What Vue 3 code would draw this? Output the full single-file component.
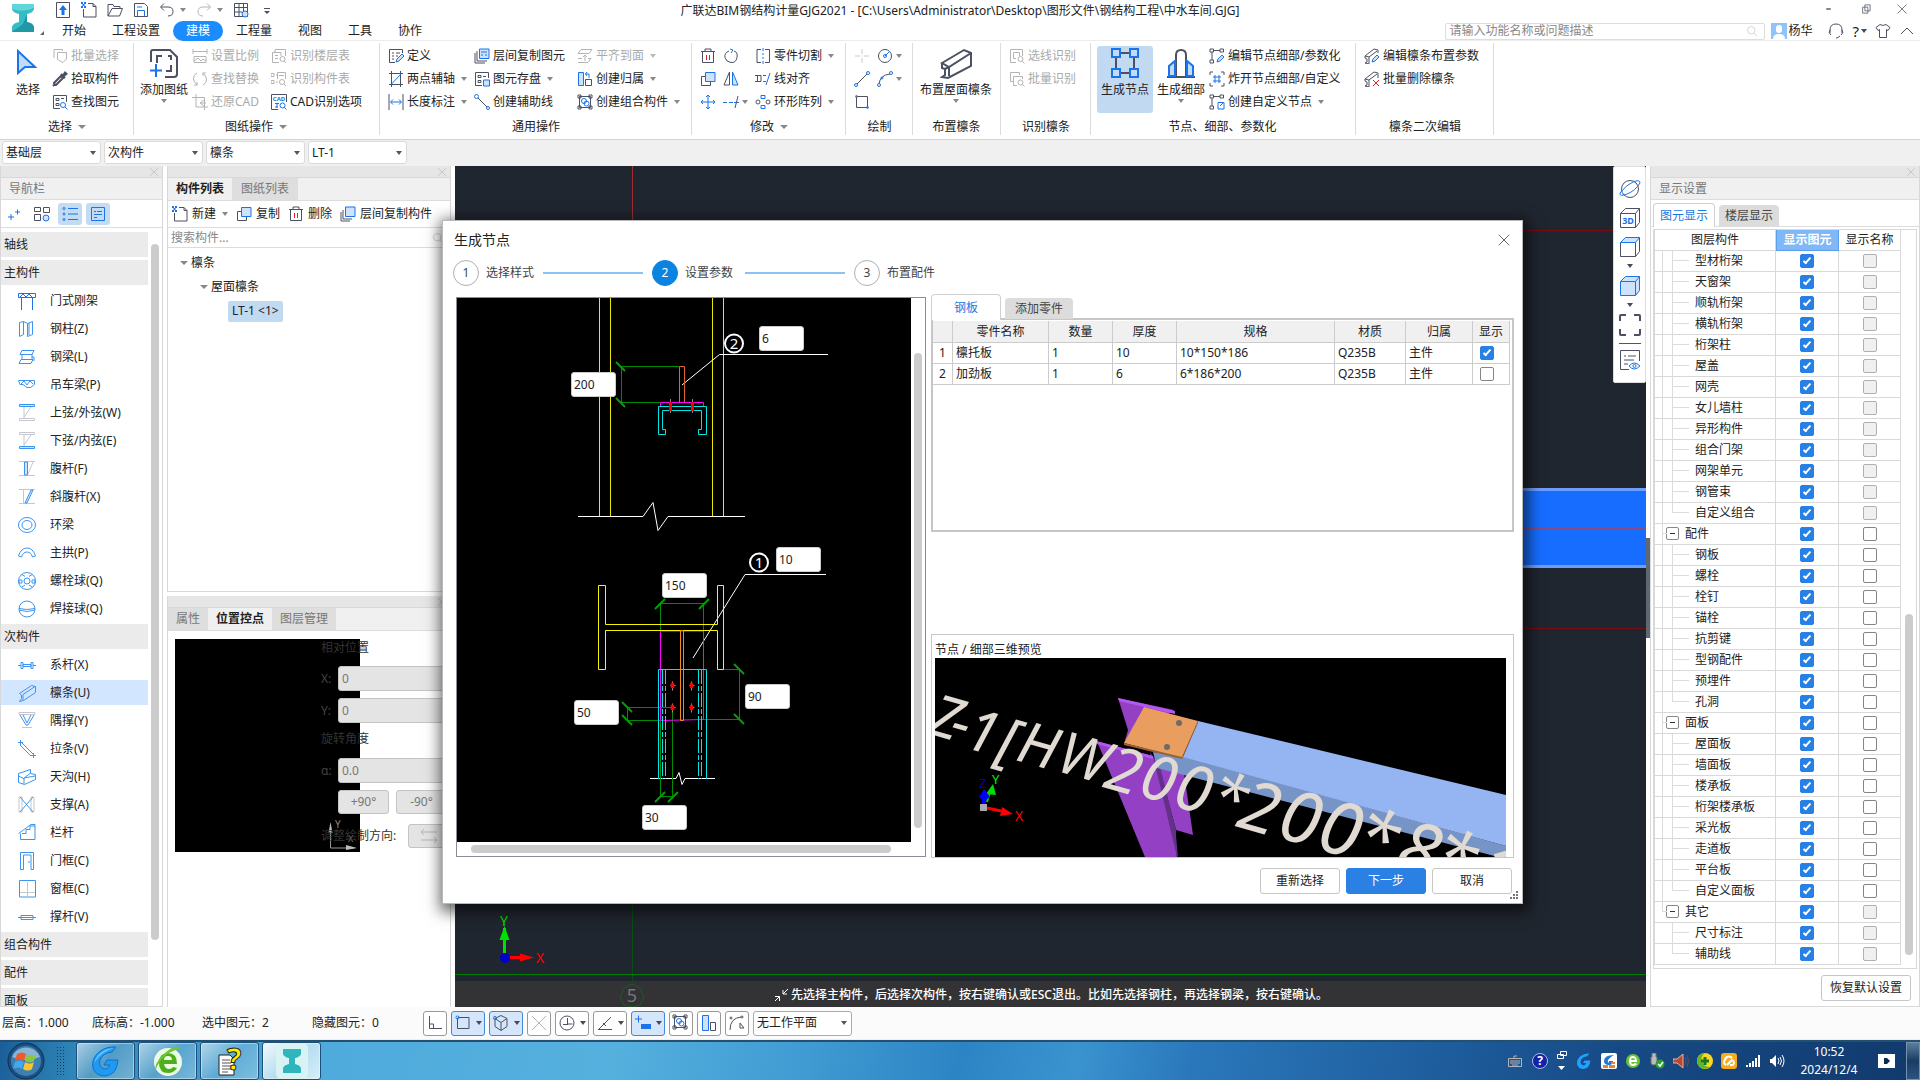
<template>
  <div class="app">
    <!-- 标题栏 -->
    <header class="header">
      <div class="logo">
        <svg width="24" height="30" viewBox="0 0 24 30">
          <path d="M1 1h22v5q-1 4-7 5v8q6 1 7 5v5h-22v-5q1-4 7-5v-8q-6-1-7-5z" fill="#35bcc4" />
          <path d="M1 1h22v4q-11 5-22 1z" fill="#5fd6d8" />
          <path d="M23 29v-5q-1-4-7-5v-8l-4 10-11 8z" fill="#2098a6" />
        </svg>
        <i class="corner"></i>
      </div>
      <div class="quick">
        <button v-for="q in quickTools" :key="q.icon" type="button" class="plain" :aria-label="q.label">
          <Ico :name="q.icon" :muted="q.muted" /><i v-if="q.arrow" class="arrow"></i>
        </button>
      </div>
      <h1 class="title">广联达BIM钢结构计量GJG2021 - [C:\Users\Administrator\Desktop\图形文件\钢结构工程\中水车间.GJG]</h1>
      <div class="win-btns">
        <button v-for="w in ['min', 'restore', 'close']" :key="w" type="button" class="plain" :aria-label="w"><Ico :name="w" :size="12" /></button>
      </div>
      <nav class="tabs">
        <a v-for="t in menuTabs" :key="t" href="#" :class="{ active: t === activeTab }" @click.prevent="activeTab = t">{{ t }}</a>
      </nav>
      <div class="user-area">
        <label class="search-box">
          <input type="text" placeholder="请输入功能名称或问题描述" aria-label="搜索功能">
          <Ico name="search" :size="12" />
        </label>
        <svg class="avatar" width="16" height="16" viewBox="0 0 16 16">
          <path d="M0 0h16v16H0z" fill="#8fc4fb" />
          <path d="M5 5a3 3 0 0 1 6 0v2a3 3 0 0 1-6 0zM2 16q0-5 6-5t6 5z" fill="#fff" />
        </svg>
        <span class="user-name">杨华</span>
        <button type="button" class="plain" aria-label="客服"><Ico name="headset" /></button>
        <button type="button" class="plain help" aria-label="帮助">?<i class="arrow dark"></i></button>
        <button type="button" class="plain" aria-label="皮肤"><Ico name="shirt" /></button>
        <button type="button" class="plain" aria-label="收起"><Ico name="up" /></button>
      </div>
    </header>

    <!-- 功能区 -->
    <section class="ribbon">
      <div v-for="g in ribbon" :key="g.label" class="group" :class="g.cls">
        <div class="group-body">
          <template v-for="(col, ci) in g.cols" :key="ci">
            <button v-if="col.big" type="button" class="big" :class="{ active: col.active }">
              <Ico :name="col.big" :size="32" :box="32" />
              <span>{{ col.text }}</span>
              <i v-if="col.arrow" class="arrow"></i>
            </button>
            <div v-else class="col" :class="{ wide: col.wide }">
              <button v-for="(b, bi) in col.items" :key="bi" type="button" class="small" :disabled="b.off" :aria-label="b.text || b.icon">
                <Ico :name="b.icon" :muted="b.off" />
                <span v-if="b.text">{{ b.text }}</span>
                <i v-if="b.arrow" class="arrow"></i>
              </button>
            </div>
          </template>
        </div>
        <div class="group-label">{{ g.label }}<i v-if="g.more" class="arrow large"></i></div>
      </div>
    </section>

    <div class="combos">
      <span v-for="c in combos" :key="c" class="select-wrap">
        <select :aria-label="c"><option>{{ c }}</option></select>
      </span>
    </div>

    <main class="main">
      <!-- 导航栏 -->
      <aside class="nav-panel">
        <div class="grip"><Ico name="close" :size="10" muted /></div>
        <div class="panel-title">导航栏</div>
        <div class="nav-tools">
          <button type="button" class="plain" aria-label="展开"><Ico name="plusplus" /></button>
          <button type="button" class="plain" aria-label="分类"><Ico name="blocks" /></button>
          <button type="button" class="plain on" aria-label="列表"><Ico name="list" /></button>
          <button type="button" class="plain on" aria-label="详情"><Ico name="detail" /></button>
        </div>
        <div class="nav-scroll">
          <div class="nav-list">
            <template v-for="sec in navSections" :key="sec.title">
              <div class="nav-head">{{ sec.title }}</div>
              <a v-for="item in sec.items" :key="item[1]" href="#" class="nav-item" :class="{ active: item[1] === activeNav }" @click.prevent="activeNav = item[1]">
                <Ico :name="item[0]" :size="18" :box="18" /><span>{{ item[1] }}</span>
              </a>
            </template>
          </div>
          <i class="thumb"></i>
        </div>
      </aside>

      <!-- 构件列表 / 位置控点 -->
      <div class="middle">
        <section class="list-panel">
          <div class="grip"><Ico name="close" :size="10" muted /></div>
          <div class="panel-tabs">
            <button type="button" class="active">构件列表</button>
            <button type="button">图纸列表</button>
          </div>
          <div class="list-tools">
            <button type="button" class="plain"><Ico name="newFile" />新建<i class="arrow"></i></button>
            <button type="button" class="plain"><Ico name="copy" />复制</button>
            <button type="button" class="plain"><Ico name="trash" />删除</button>
            <button type="button" class="plain"><Ico name="copyLayer" />层间复制构件</button>
          </div>
          <label class="list-search"><input type="text" placeholder="搜索构件..." aria-label="搜索构件"><Ico name="search" :size="12" /></label>
          <ul class="tree">
            <li><i class="arrow large"></i>檩条</li>
            <li class="lv2"><i class="arrow large"></i>屋面檩条</li>
            <li class="lv3"><span>LT-1 &lt;1&gt;</span></li>
          </ul>
        </section>
        <section class="prop-panel">
          <div class="grip"><Ico name="close" :size="10" muted /></div>
          <div class="panel-tabs second">
            <button type="button">属性</button>
            <button type="button" class="active">位置控点</button>
            <button type="button">图层管理</button>
          </div>
          <div class="prop-body">
            <svg class="point-view" width="185" height="213" viewBox="0 0 185 213">
              <path d="M0 0h185v213H0z" />
              <path d="M155.500 186v23h24" stroke="#999" fill="none" />
              <path d="M153.500 194l2-11 2 11zM171 206l11 3-11 2z" fill="#bbb" />
              <text x="160" y="189" fill="#888" font-size="10">Y</text>
              <text x="173" y="203" fill="#777" font-size="9">X</text>
            </svg>
            <form class="point-form" @submit.prevent>
              <p>相对位置</p>
              <div class="field"><label for="px">X:</label><input id="px" value="0" disabled></div>
              <div class="field"><label for="py">Y:</label><input id="py" value="0" disabled></div>
              <p class="rot">旋转角度</p>
              <div class="field"><label for="pa">α:</label><input id="pa" value="0.0" disabled></div>
              <div class="turns"><button type="button" disabled>+90°</button><button type="button" disabled>-90°</button></div>
              <div class="direction"><span>调整绘制方向:</span><button type="button" disabled aria-label="调整绘制方向"><Ico name="swap" :size="20" :box="20" muted /></button></div>
            </form>
          </div>
        </section>
      </div>

      <!-- 绘图区 -->
      <section class="canvas">
        <svg class="scene" viewBox="455 166 1191 841" preserveAspectRatio="xMinYMin slice">
          <path d="M455 166h1191v841H455z" fill="#20262f" />
          <path d="M632.500 166v60" stroke="#a02c34" />
          <path d="M455 230.500h1191M455 628.500h1191" stroke="#7a0c12" />
          <path d="M632.500 628v379" stroke="#0b4d14" />
          <path d="M455 974.500h1191" stroke="#008000" />
          <path d="M455 488h1191v80H455z" fill="#6e9dff" />
          <path d="M455 491h1191v74H455z" fill="#176dff" />
          <path d="M455 528.500h1191" stroke="#8a4a80" />
          <path d="M455 981h1191v26H455z" fill="#333335" />
          <path d="M632 984l8 4 4 9-4 8-8 2-8-2-4-8 4-9z" stroke="#1d5a22" fill="none" />
          <text x="632" y="1002" class="axis-no" text-anchor="middle">5</text>
          <path d="M504.500 956v-28" stroke="#00e000" stroke-width="3" />
          <path d="M504.500 926l-5 14h10z" fill="#00e000" />
          <path d="M506 957.500h18" stroke="#f00" stroke-width="3" />
          <path d="M534 957.500l-14-4v8z" fill="#f00" />
          <circle cx="505" cy="958" r="5" fill="#0000c8" />
          <text x="500" y="926" fill="#00e000" class="axis-text">Y</text>
          <text x="536" y="963" fill="#f00" class="axis-text">X</text>
        </svg>
        <div class="hint"><Ico name="collapse" :size="16" light /> 先选择主构件，后选择次构件，按右键确认或ESC退出。比如先选择钢柱，再选择钢梁，按右键确认。</div>
        <div class="view-tools">
          <button v-for="v in viewTools" :key="v.icon" type="button" class="plain" :class="{ ruled: v.ruled }" :aria-label="v.icon">
            <Ico :name="v.icon" :size="22" :box="22" /><i v-if="v.arrow" class="arrow dark"></i>
          </button>
        </div>
      </section>
      <div class="splitter"><i></i></div>

      <!-- 显示设置 -->
      <aside class="show-panel">
        <div class="grip"><Ico name="close" :size="10" muted /></div>
        <div class="panel-title">显示设置</div>
        <div class="card-tabs">
          <button type="button" class="active">图元显示</button>
          <button type="button">楼层显示</button>
        </div>
        <div class="show-box">
          <table class="show-table">
            <thead>
              <tr><th class="c-name">图层构件</th><th class="picked">显示图元</th><th>显示名称</th></tr>
            </thead>
            <tbody>
              <tr v-for="r in layerRows" :key="r.name">
                <td class="c-name">
                  <div class="leaf" :class="{ parent: r.parent, last: r.last, tail: r.tail, end: r.name === '其它' }">
                    <button v-if="r.parent" type="button" class="fold" aria-label="折叠"></button>{{ r.name }}
                  </div>
                </td>
                <td><input v-model="r.show" type="checkbox" :aria-label="r.name + '显示图元'"></td>
                <td><input v-model="r.label" type="checkbox" :disabled="r.off" :aria-label="r.name + '显示名称'"></td>
              </tr>
            </tbody>
          </table>
          <i class="thumb"></i>
        </div>
        <div class="show-foot"><button type="button" class="btn">恢复默认设置</button></div>
      </aside>
    </main>

    <footer class="status">
      <span class="st1">层高：1.000</span>
      <span class="st2">底标高：-1.000</span>
      <span class="st3">选中图元：2</span>
      <span class="st4">隐藏图元：0</span>
      <div class="snap">
        <button v-for="s in snapTools" :key="s.icon" type="button" :class="{ on: s.on }" :aria-label="s.icon">
          <Ico :name="s.icon" :size="18" :box="18" :muted="s.muted" /><i v-if="s.arrow" class="arrow dark"></i>
        </button>
        <span class="select-wrap plane"><select aria-label="工作平面"><option>无工作平面</option></select></span>
      </div>
    </footer>

    <!-- 系统任务栏 -->
    <div class="taskbar">
      <button type="button" class="orb" aria-label="开始菜单">
        <svg width="38" height="38" viewBox="0 0 38 38">
          <circle cx="19" cy="19" r="18" fill="#1b4f80" stroke="#0e2f52" />
          <circle cx="19" cy="19" r="15" fill="#3d7fb2" />
          <path d="M5 15a15 15 0 0 1 28 0q-14 6-28 0z" fill="#a9cbe2" opacity=".7" />
          <path d="M10 12q5-3 9 0l-2 7q-4-3-9 0z" fill="#f0592a" />
          <path d="M20 12q5 3 9 0l-2 7q-4 3-9 0z" fill="#8cc63f" />
          <path d="M8 20q5-3 9 0l-2 7q-4-3-9 0z" fill="#3fa9f5" />
          <path d="M18 20q5 3 9 0l-2 7q-4 3-9 0z" fill="#fdc52c" />
        </svg>
      </button>
      <i class="dots"></i>
      <button type="button" class="task" aria-label="广联达">
        <svg width="32" height="34" viewBox="0 0 32 34"><path d="M26 3q-9-1-17 5-8 7-6 16 3 8 12 8 12-1 13-16H17l-3 5h6q-2 5-6 4-6-2-4-9 3-7 12-8z" fill="#1f9af0" stroke="#0c70d0" /><path d="M24 4q-9 0-15 6-4 4-5 9 7-11 20-15z" fill="#5fc3ff" /></svg>
      </button>
      <button type="button" class="task" aria-label="浏览器">
        <svg width="32" height="34" viewBox="0 0 32 34"><circle cx="16" cy="18" r="14" fill="#eefbe4" /><path d="M25 24q-3 5-9 5-9 0-9-10t9-10q9 0 9 11H12q1 5 5 5 3 0 4-2zM12 16h8q0-4-4-4t-4 4z" fill="#4fae1e" /><path d="M4 28Q1 20 12 10T29 4q-14 4-20 12T4 28z" fill="#6cc533" /></svg>
      </button>
      <button type="button" class="task" aria-label="帮助文档">
        <svg width="32" height="34" viewBox="0 0 32 34"><path d="M5 11h11l4 4v16H5z" fill="#fff" stroke="#222" /><path d="M8 16h8M8 19h9M8 22h9M8 25h9M8 28h6" stroke="#555" /><text x="13" y="26" class="doc-mark">?</text></svg>
      </button>
      <button type="button" class="task current" aria-label="钢结构计量">
        <svg width="32" height="36" viewBox="0 0 32 36"><rect width="32" height="36" rx="5" fill="#d9f3f5" /><path d="M7 6h18v5q-1 3-6 4v6q5 1 6 4v5H7v-5q1-3 6-4v-6q-5-1-6-4z" fill="#2fb5bc" /></svg>
      </button>
      <div class="tray">
        <Ico name="keyboard" :size="16" muted />
        <svg width="18" height="18" viewBox="0 0 18 18"><circle cx="9" cy="9" r="7.500" fill="#1522a8" stroke="#a9b8e8" /><text x="9" y="13" fill="#fff" font-size="12" font-weight="700" text-anchor="middle">?</text></svg>
        <svg width="10" height="22" viewBox="0 0 10 22"><path d="M3.500 1.500h6v4h-6zM.5 4.500h6v4h-6z" fill="#1c4d85" stroke="#fff" /><path d="M1 16h7l-3.500 4z" fill="#fff" /></svg>
        <svg width="18" height="18" viewBox="0 0 32 34"><path d="M26 3q-9-1-17 5-8 7-6 16 3 8 12 8 12-1 13-16H17l-3 5h6q-2 5-6 4-6-2-4-9 3-7 12-8z" fill="#1fa2ff" /></svg>
        <svg width="16" height="16" viewBox="0 0 16 16"><rect width="16" height="16" rx="2" fill="#fff" /><path d="M13 2Q3 2 3 8q0 4 5 4 4 0 4-4H8v2q-2-1-1-3 2-3 6-5z" fill="#1f78d8" /><path d="M2 12h5v3H2zM8 12h6v3H8zM10 9h4v2h-4z" fill="#f08030" /></svg>
        <svg width="16" height="16" viewBox="0 0 16 16"><circle cx="8" cy="8" r="7" fill="#6cc23a" /><path d="M12 11q-1 2-4 2-4 0-4-5t4-5q4 0 4 6H6q0 2 2 2 1 0 2-1zM6 7h4q0-2-2-2T6 7z" fill="#fff" /></svg>
        <svg width="16" height="16" viewBox="0 0 16 16"><path d="M3 0h4v4h1v6q0 2-3 2t-3-2V4h1z" fill="#b9bcc0" stroke="#6a6f76" /><circle cx="11" cy="11" r="4.500" fill="#28a428" /><path d="M9 11l2 2 3-4" stroke="#fff" stroke-width="1.500" fill="none" /></svg>
        <svg width="16" height="16" viewBox="0 0 16 16"><path d="M0 6h4l6-5v14l-6-5H0z" fill="#b84a30" stroke="#f0b0a0" /><path d="M12 4q2 4 0 8M14 2q3 6 0 12" stroke="#8a4030" fill="none" /></svg>
        <svg width="16" height="16" viewBox="0 0 16 16"><circle cx="8" cy="8" r="8" fill="#ffd61f" /><path d="M0 8a8 8 0 0 1 8-8q-5 4-3 9t8 5A8 8 0 0 1 0 8z" fill="#5fb82b" /><path d="M8 4v8M4 8h8" stroke="#147a28" stroke-width="3" /></svg>
        <svg width="16" height="16" viewBox="0 0 16 16"><rect width="16" height="16" rx="3" fill="#f7ab1e" /><path d="M5 12a3 3 0 0 1-1-5 4 4 0 0 1 7-2M6 12l5-5a3 3 0 0 1 1 5H9" stroke="#fff" stroke-width="2" fill="none" /></svg>
        <svg width="16" height="14" viewBox="0 0 16 14"><path d="M1 11h2v2H1zM4 9h2v4H4zM7 7h2v6H7zM10 4h2v9h-2zM13 1h2v12h-2z" fill="#fff" /></svg>
        <svg width="16" height="16" viewBox="0 0 16 16"><path d="M1 6h2l4-4v12l-4-4H1z" fill="#fff" /><path d="M9 5q2 3 0 6M11 4q3 4 0 8M13 2q4 6 0 12" stroke="#fff" fill="none" /></svg>
      </div>
      <div class="clock"><span>10:52</span><span>2024/12/4</span></div>
      <svg class="note" width="17" height="14" viewBox="0 0 17 14"><path d="M0 0h17v14H0z" fill="#fff" /><path d="M6 4h3l3 3-3 3H6z" fill="#0c2b4e" /></svg>
      <i class="desktop"></i>
    </div>

    <!-- 生成节点 -->
    <div class="overlay">
      <section class="dialog" role="dialog" aria-label="生成节点">
        <div class="dlg-title"><h2>生成节点</h2><button type="button" class="plain" aria-label="关闭"><Ico name="close" :size="14" /></button></div>
        <ol class="steps">
          <li><b>1</b>选择样式</li>
          <li class="bar"></li>
          <li class="on"><b>2</b>设置参数</li>
          <li class="bar"></li>
          <li><b>3</b>布置配件</li>
        </ol>
        <div class="dlg-body">
          <div class="drawing">
            <div class="sheet">
              <svg viewBox="457 298 454 544" width="454" height="544" fill="none">
                <path d="M457 298h454v544H457z" fill="#000" />
                <path d="M599.500 298v219M610.500 298v219M712.500 298v219M723.500 298v219" stroke="#e8e800" />
                <path d="M578 516.500h65l10-14 5 28 10-14h77M682 385l37.500-30.500H828M650 778.500h26l3-6 3 12 3-6h30M693 658l52-83.500h81" stroke="#fff" />
                <path d="M621.500 366v37M621 366.500h58M621 402.500h40M660 603.500h43M660.500 603v194M703.500 603v28M723 669.500h16M703 719.500h36M739.500 669v50M627 707.500h45M627 720.500h33M627.500 707v13M672.500 707v90M660 796.500h12" stroke="#008c00" />
                <path d="M616 362l9 9M616 398l9 9M655 609l10-10M699 609l10-10M622 702l10 10M622 715l10 10M734 664l10 10M734 714l10 10M655 802l10-10M668 802l10-10" stroke="#00a000" stroke-width="2" />
                <path d="M679.500 366.500h5v36h-5z" stroke="#e8622a" />
                <path d="M660.500 406v-3.500h43v3.500M660.500 631v89.500l43-1V631z" stroke="#f0f" />
                <path d="M658.500 406.500h48v28h-8v-5h3v-19h-39v19h3v5h-7zM658.500 779v-109.500h48V779" stroke="#00e5e5" />
                <path d="M662.500 670v109M665.500 670v109M698.500 670v109M701.500 670v109" stroke="#00e5e5" stroke-dasharray="14 2 5 2" />
                <path d="M598.500 585.500h7v39h112v-39h6v84h-6v-39h-112v39h-7z" stroke="#f5f500" />
                <path d="M680.500 630.500h3v90h-3z" stroke="#f08c1e" />
                <path d="M670.500 399v14M692.500 399v14" stroke="#888" />
                <path d="M670.500 402v9M692.500 402v9" stroke="#f00" stroke-width="3" />
                <g v-for="p in boltPoints" :key="p.join()">
                  <path :d="`M${p[0]} ${p[1] - 4}v9M${p[0] - 2} ${p[1]}h5`" stroke="#999" />
                  <ellipse :cx="p[0]" :cy="p[1]" rx="2" ry="3" fill="#f00" />
                </g>
                <circle cx="734" cy="343.500" r="9" stroke="#fff" stroke-width="2" />
                <circle cx="759" cy="562.500" r="9" stroke="#fff" stroke-width="2" />
                <text x="734" y="349" fill="#fff" font-size="15" text-anchor="middle">2</text>
                <text x="759" y="568" fill="#fff" font-size="15" text-anchor="middle">1</text>
              </svg>
              <input v-for="d in dims" :key="d.id" v-model="d.value" class="dim" :class="d.id" :aria-label="'尺寸 ' + d.value">
            </div>
            <i class="v-thumb"></i>
            <i class="h-thumb"></i>
          </div>

          <div class="dlg-right">
            <div class="card-tabs parts-tabs">
              <button type="button" class="active">钢板</button>
              <button type="button">添加零件</button>
            </div>
            <div class="parts-box">
              <table class="parts">
                <colgroup><col v-for="n in 8" :key="n" :class="'p' + n"></colgroup>
                <thead>
                  <tr><th></th><th v-for="h in partHeads" :key="h">{{ h }}</th></tr>
                </thead>
                <tbody>
                  <tr v-for="(p, i) in parts" :key="p.name">
                    <td class="no">{{ i + 1 }}</td>
                    <td>{{ p.name }}</td>
                    <td>{{ p.count }}</td>
                    <td>{{ p.thick }}</td>
                    <td>{{ p.spec }}</td>
                    <td>{{ p.material }}</td>
                    <td>{{ p.owner }}</td>
                    <td class="chk"><input v-model="p.show" type="checkbox" :aria-label="p.name + '显示'"></td>
                  </tr>
                </tbody>
              </table>
            </div>
            <div class="preview">
              <p>节点 / 细部三维预览</p>
              <svg viewBox="935 658 571 199" preserveAspectRatio="xMidYMid slice">
                <path d="M935 658h571v199H935z" />
                <path d="M1118 698l56 12-50 34 4-14z" fill="#9340c4" />
                <path d="M1118 698l57 13v3l-56-13z" fill="#b557f5" />
                <path d="M1159 766l25 7 9 62-17-5z" fill="#9340c4" />
                <path d="M1150 752l10 15 16 63v6l2 21-14-20z" fill="#65308a" />
                <path d="M1096 741l57 15 24 101h-32l-46-111z" fill="#9340c4" />
                <path d="M1096 741l57 15v3l-56-15z" fill="#b557f5" />
                <path d="M1153 752l30 4 323 90v13l-349-91z" fill="#7794c6" />
                <path d="M1198 721l308 74v51l-323-89z" fill="#94b4f2" />
                <path d="M1144 707l54 14-16 37-58-15z" fill="#e99d5e" />
                <path d="M1198 721v2l-16 36-58-14v-2l58 14z" fill="#9a6234" />
                <circle cx="1179" cy="723" r="3" fill="#6b6b6b" />
                <circle cx="1167" cy="747" r="3" fill="#6b6b6b" />
                <g fill="#e0dad2" font-style="italic" text-anchor="middle">
                  <text v-for="(g, i) in modelText" :key="i" :transform="`translate(${g[1]} ${g[2]}) rotate(16)`" :font-size="g[3]" :y="g[3] * 0.36">{{ g[0] }}</text>
                </g>
                <path d="M987 802l3-10" stroke="#0d0" stroke-width="2" />
                <path d="M993 784l3 11-10-1z" fill="#00e000" />
                <path d="M984 804v-10" stroke="#00f" stroke-width="4" />
                <path d="M984 789l6 8q-6 6-11 0z" fill="#00f" />
                <path d="M987 808l14 3" stroke="#f00" stroke-width="3" />
                <path d="M1013 814l-13 2 2-9z" fill="#f00" />
                <path d="M980 804h7v7h-7z" fill="#aaa" />
                <text x="979" y="788" fill="#0000c8" font-size="13">Z</text>
                <text x="992" y="784" fill="#00f000" font-size="13">Y</text>
                <text x="1015" y="821" fill="#f00" font-size="14">X</text>
              </svg>
            </div>
            <div class="dlg-foot">
              <button type="button" class="btn">重新选择</button>
              <button type="button" class="btn primary">下一步</button>
              <button type="button" class="btn">取消</button>
            </div>
          </div>
        </div>
        <svg class="resize" width="9" height="9" viewBox="0 0 9 9"><path d="M6 0h2v2H6zM6 3h2v2H6zM3 3h2v2H3zM6 6h2v2H6zM3 6h2v2H3zM0 6h2v2H0z" fill="#777" /></svg>
      </section>
    </div>
  </div>
</template>

<script setup>
import { h, ref, reactive } from 'vue'

// ================= 图标 =================
// 每个图标由若干 [路径, 画笔] 组成；画笔为 t 时是 [文字, 't', x, y, 字号]
const K = '#4b5163'
const B = '#1a73e8'
const N = '#3d94f0'
const pens = {
  k: { stroke: K, fill: 'none' },
  b: { stroke: B, fill: 'none' },
  n: { stroke: N, fill: 'none' },
  g: { stroke: '#c4c8ce', fill: 'none' },
  l: { stroke: B, fill: '#cfe2fb' },
  nl: { stroke: N, fill: '#cfe4fb' },
  w: { stroke: K, fill: '#fff' },
  r: { stroke: '#e02020', fill: 'none' },
  kf: { stroke: 'none', fill: K },
  bf: { stroke: 'none', fill: B },
  K: { stroke: K, fill: 'none', 'stroke-width': 2 },
  B: { stroke: B, fill: '#c3dbf5', 'stroke-width': 2 },
}
const o = (x, y, r) => `M${x - r} ${y}a${r} ${r} 0 1 0 ${2 * r} 0a${r} ${r} 0 1 0 ${-2 * r} 0z`

const icons = {
  // 快捷工具
  upload: [['M1.500 .5h13v15h-13z', 'k'], ['M8 3l4 5h-2.500v5h-3V8H4z', 'bf']],
  newFile: [['M7 1.500h5l3 3v10.500H2.500V7', 'k'], ['M12 1.500v3h3', 'k'], ['M0 0h2v2H0zM3 0h2v2H3zM1.500 2h2v2h-2zM0 4h2v2H0zM3 4h2v2H3z', 'bf']],
  open: [['M1 14V2.500h5l1 2h6v2M1 14h11.500l3-7.500H5z', 'k']],
  save: [['M1.500 1.500h10l3 3v10h-13z', 'k'], ['M4.500 14V8.500h7V14M4 5h5', 'b']],
  undo: [['M5 1.500L1.500 5 5 8.500M2 5h7q5 0 5 4.500T9 14', 'k']],
  redo: [['M11 1.500L14.500 5 11 8.500M14 5H7Q2 5 2 9.500T7 14', 'k']],
  tableView: [['M1.500 1.500h13v13h-13zM1.500 5.500h13M1.500 10h8M6 1.500v13M10.500 1.500v8', 'k'], [o(12, 12, 3), 'l']],
  more: [['M5 6.500h6', 'k'], ['M5 9h6l-3 3z', 'kf']],
  min: [['M3 7.500h6M3 8.500h6', 'k']],
  restore: [['M6.500 2.500h7v8h-7zM3.500 5.500h7v8h-7z', 'w']],
  close: [['M2 2l12 12M14 2L2 14', 'k']],
  search: [[o(7, 7, 5), 'g'], ['M11 11l4 4', 'g']],
  headset: [['M2 10V7q0-6 6-6t6 6v3M2 7q-2 3 1 5M14 7q2 3-1 5M12 13q-2 2-4 2', 'k']],
  shirt: [['M5 1.500l-4 3 2 3 1.500-1V14.500h7V6.500l1.500 1 2-3-4-3q-3 2-6 0z', 'k']],
  up: [['M2 11l6-6 6 6', 'k']],
  // 选择
  cursor: [['M6 4v22l7-6h10z', 'B']],
  batchSel: [['M2 10V1.500h8.500V3M5.500 4.500h9V11l-3.500 3.500-5.500-3z', 'k']],
  dropper: [['M9 3l4 4M2 14l-1 1M3 14l-1-2 7-7 2 2-7 7z', 'K'], ['M10 4l3-4 3 3-4 3z', 'kf']],
  findEl: [['M8 14.500H1.500v-13h13V8', 'k'], ['M4 4.500h3v2H4zM9 4.500h3M4 9.500h3v2H4z', 'k'], [o(11, 11, 2.5), 'b'], ['M13 13l2.500 2.500', 'b']],
  // 图纸操作
  addSheet: [['M3 15V5q0-2 2-2h17l7 7v17q0 3-3 3H17M9 16V9h5M20 9h3v4M23 18v6h-5', 'K'], ['M2 23.500h12M8 17v13', 'B']],
  scale: [['M1 1v5M15 1v5M1 3.500h14M2 8.500h12v6H2zM2 13l4-3 3 3 2-2 3 2', 'k']],
  replace: [['M5 2Q1 4 1.500 8t4 6M5 11v3H2M11 14q4-2 3.500-6t-4-6M11 5V2h3', 'k']],
  restoreCad: [['M4 0v13h12M0 3.500h12.500V16M12 6l-4 3 4 3M8 9h6', 'k']],
  floorTab: [['M4 4V1.500h10.500V8M8 14.500H1.500V4.500H10V8M4 7.500h3M4 10.500h3', 'k'], [o(11.5, 11, 2.5), 'k'], ['M13 13l2 2', 'k']],
  compTab: [['M0 2.500h3v3H0zM0 9.500h3v3H0zM6.500 8V1.500h8V8M8 4.500h5M5 4h2M5 11h2', 'k'], [o(11, 11, 2.5), 'k'], ['M13 13l2 2', 'k']],
  cadOpt: [['M7 15.500H.5V.5h15V8', 'k'], ['CAD', 't', 8, 7, 6], ['M4 9.500h4M6 9.500v4M4 13h3', 'b'], [o(11.5, 11.5, 2.5), 'b'], ['M13 13l2.500 2.500', 'b']],
  // 通用操作
  define: [['M7 14.500H1.500v-13h13V5M4 5h2M8 5h4M4 8h2M8 8h2M4 11h2', 'k'], ['M8 14l1-3 5-5 2 2-5 5z', 'l']],
  twoAxis: [['M1 2.500h14M1 13.500h14M3.500 0v16M12.500 0v16', 'k'], ['M3 13.500L13 3', 'b']],
  lenDim: [['M1 0v16M15 0v16', 'k'], ['M3 8h10M5 5.500L2.500 8 5 10.500M11 5.500L13.500 8 11 10.500', 'b']],
  copyFloor: [['M1 5v10h10M3 3v10h10', 'k'], ['M5.500 1h9.500v9.500H5.500z', 'l'], ['M7 4h6M7 7h2M11 7h2', 'b']],
  storeEl: [['M8 14.500H1.500v-13h13V7M4 4.500h3v2H4zM9 5.500h3M4 9.500h3v2H4z', 'k'], ['M9.500 9h6v6h-6z', 'l']],
  auxLine: [['M4 4l9 9', 'k'], [o(2.5, 2.5, 2), 'b'], [o(14, 14, 1.5), 'b']],
  toFace: [['M4 1.500h11l-3 4H1zM8 13V7M6 9l2-2 2 2M1 10.500h4M11 10.500h3l-3 4H1', 'k']],
  owner: [['M1.500 1.500h5v13h-5z', 'l'], ['M8.500 8.500h6v6h-6z', 'k'], ['M12 7V3H8.500M10 1L8.500 3 10 5', 'b']],
  combine: [['M2.500 2.500h11v11h-11z', 'k'], ['M1 1h3v3H1zM12 1h3v3h-3zM1 12h3v3H1zM12 12h3v3h-3z', 'k'], [o(7, 7, 2.5), 'b'], [o(9.5, 9.5, 2.5), 'b']],
  // 修改
  trash: [['M1 3.500h14M5 3V1h6v2M2.500 4v10.500h11V4', 'k'], ['M6.500 7v5M9.500 7v5', 'r']],
  copy: [['M1.500 5.500h9v9h-9z', 'k'], ['M5.500 1.500h9.500v9H5.500z', 'l']],
  copyLayer: [['M1 6v9h9M3 4v9h9', 'k'], ['M5.500 1h9.500v9.500H5.500z', 'l']],
  move: [['M8 1v14M1 8h14M6 3l2-2 2 2M6 13l2 2 2-2M3 6L1 8l2 2M13 6l2 2-2 2', 'b']],
  rotate: [['M6 3Q1 5 2 9.500T8 14.500t6-5T11 3', 'k'], ['M7 1l3 1-2 3', 'b']],
  mirror: [['M6.500 1v13H1z', 'k'], ['M9.500 1v13H15z', 'l']],
  extend: [['M0 8.500h4M6 8.500h4M11 8.500h5', 'b'], ['M15 2l-3 12', 'k']],
  cutPart: [['M6 1.500H2v13h4M10 1.500h4.500v13H10', 'k'], ['M8 0v3M8 5v2M8 9v2M8 13v3', 'b']],
  alignLine: [['M0 4.500h6v6H0M2.500 5v5M8 4.500h3', 'k'], ['M15 2l-4 12M8 10.500h3', 'b']],
  ring: [[o(3, 8, 2), 'k'], ['M6 1.500h4v3H6zM6 11.500h4v3H6z', 'b'], [o(13, 8, 2), 'k']],
  // 绘制
  point: [['M8 1v5M8 10v5M1 8h5M10 8h5M7.500 8h1', 'g']],
  circle: [[o(8, 8, 6.5), 'k'], ['M8 8l4-4', 'b'], [o(8, 8, 1.5), 'b']],
  line: [['M3 13L13 3', 'k'], [o(2, 14, 1.5), 'b'], [o(14, 2, 1.5), 'b']],
  arc: [['M2 13Q3 4 13 3', 'k'], [o(2, 14, 1.5), 'b'], [o(14, 2, 1.5), 'b'], [o(5, 7, 1), 'b']],
  rect: [['M2.500 2.500h11v11h-11z', 'k'], [o(2.5, 2.5, 1), 'b'], [o(13.5, 13.5, 1), 'b']],
  beam: [['M2 16L24 3l7 3L9 20zM2 16v5l3 1v6l-3 2 6 1 23-12V6M9 20v9M2 16l7 4M5 22l4-2', 'K']],
  lineRec: [['M7 14.500H1.500v-13h12V8M7 10.500H4.500v-6h6V8', 'k'], [o(11.5, 11, 2.5), 'k'], ['M13 13l2.500 2.500', 'k']],
  batchRec: [['M5 10.500H1.500v-9h9V4M8 14.500H4.500v-9h9V8', 'k'], [o(11.5, 11.5, 2.5), 'k'], ['M13 13l2.500 2.500', 'k']],
  // 节点
  node: [['M7 10v12M25 10v12M10 6h12M10 26h12', 'K'], ['M3 2h8v8H3zM21 2h8v8h-8zM3 22h8v8H3zM21 22h8v8h-8z', 'B']],
  part: [['M11 29V8q0-5 5-5t5 5v21M2 30h28', 'K'], ['M4 29V19l6-5v15zM28 29V19l-6-5v15z', 'B']],
  editNode: [['M3 4v8M5 2.500h6M1 1h3.500v3H1zM11 1h3.500v3H11zM1 12h3.500v3H1z', 'k'], ['M8 14l1-3 4-4 2 2-4 4z', 'l']],
  explode: [['M1 4V1h3M12 1h3v3M1 12v3h3M12 15h3v-3', 'k'], ['M5 5h2v2H5zM9 5h2v2H9zM5 9h2v2H5zM9 9h2v2H9z', 'b']],
  customNode: [['M3 4v8M5 2.500h6M1 1h3.500v3H1zM11 1h3.500v3H11zM1 12h3.500v3H1z', 'k'], ['M9 8.500h6v6.500H9zM11 12l3-3', 'b']],
  editBeam: [['M1 8l9-7 4 1v3M1 8v2l2 1v3l-2 1 4 1V9zM5 9l8-6', 'k'], ['M8 14l1-3 4-4 2 2-4 4z', 'l']],
  delBeam: [['M1 8l9-7 4 1v5M1 8v2l2 1v3l-2 1 4 1V9zM5 9l8-6', 'k'], ['M9 9l6 6M15 9l-6 6', 'r']],
  // 导航栏
  plusplus: [['M2 11h6M5 8v6M9 6h5M11.500 3.500v5', 'b']],
  blocks: [['M.5 1.500h6v4h-6zM.5 8.500h6v6h-6zM9.500 1.500h6v5h-6z', 'k'], [o(12, 12, 3), 'l']],
  list: [['M6 2.500h10M6 8h10M6 13.500h10', 'b'], [o(2, 2.5, 1), 'b'], [o(2, 8, 1), 'b'], [o(2, 13.5, 1), 'b']],
  detail: [['M1.500 1.500h13v13h-13zM4 5.500h2M7 5.500h5M4 8.500h8M4 11.500h3', 'b']],
  portal: [['M.5 1.500h17v4H.5zM3.500 6v12M14.500 6v12M2 5l3-3 3 3 3-3 3 3', 'b']],
  column: [['M1.500 2.500l4-1v13l-4 2zM5.500 1.500l4 2v13M9.500 3.500l5-2v13l-5 2', 'n'], ['M11 3v12', 'nl']],
  girder: [['M4 2.500h12l-2 4H2zM4 6.500v5M14 6v5M3 11.500h12l-2 4H1zM14 9h2v4', 'n']],
  crane: [['M.5 4.500h16v4l-4 3H9l-4-3H2zM3 8l3-3 3 4 3-4 3 3', 'n']],
  topChord: [['M1.500 .5h15v2h-15z', 'nl'], ['M1.500 14.500h15v2h-15zM6 3v11M13 3L6 13', 'g']],
  botChord: [['M1.500 14.500h15v2h-15z', 'nl'], ['M1.500 .5h15v2h-15zM6 3v11M13 3L6 13', 'g']],
  web: [['M1 1.500h16M1 15.500h16M15 2l-5 12', 'g'], ['M6.500 2h3v13h-3z', 'nl']],
  diagWeb: [['M1 1.500h16M1 15.500h16M5.500 2v13', 'g'], ['M13 2l-6 13h2l6-13z', 'nl']],
  ringBeam: [['M.5 9a8.500 7.500 0 1 0 17 0a8.500 7.500 0 1 0-17 0zM4 9a5 4.500 0 1 0 10 0a5 4.500 0 1 0-10 0z', 'n']],
  arch: [['M.5 12Q3 4 9 4t8.500 8l-3 1Q13 8 9 8t-5.500 5z', 'n']],
  boltBall: [[o(9, 9, 8.5), 'n'], [o(9, 9, 3), 'n'], ['M4 2.500l3 2M14 2.500l-3 2M1 8v3h3V8zM14 8h3v3h-3zM4 15l3-2M14 15l-3-2', 'n']],
  weldBall: [[o(9, 9, 8), 'n'], ['M1 8.500q8 2 16 0M1 10q8 3 16 0', 'n']],
  tie: [['M3 6.500h2v6H3zM13 6.500h2v6h-2zM5 8.500h8v2H5zM0 9.500h3M15 9.500h3', 'n']],
  purlin: [['M1.500 9.500l12-8 4 1v6l-12 8-4 1 2-3V11zM5 10.500l12-8M5 10.500v6', 'n']],
  knee: [['M1 .5h16v2H1zM4 15.500h10', 'g'], ['M2 3l6 10h2l6-10M5 3l4 8 4-8', 'n']],
  brace: [['M4 3l11 11M2 5l11 11M0 2.500h5M2.500 0v5M13 15.500h5M15.500 13v5', 'n']],
  gutter: [['M.5 5.500l12-4v4l5 1v5l-11 5-6-2zM6 11v5M12 5.500L6 10l11-2M.5 8l6 3', 'n']],
  cross: [['M1 1h3v15H1zM13 1h3v15h-3z', 'g'], ['M2 1l13 15M15 1L2 16', 'n']],
  rail: [['M.5 9.500L13 .5h4v15H2.500v-6M4 9.500h4v-4h4V2h5', 'n']],
  door: [['M2.500 17.500V.5h13v17h-2.500V3H5.500v14.500z', 'n'], ['M11 9v2', 'n']],
  windowF: [['M1.500 .5h16v16.500h-16z', 'n'], ['M9.500 2v14M2 12.500h15', 'g']],
  strut: [['M0 9.500h18', 'n'], ['M3 7.500h12v4H3z', 'n']],
  swap: [['M18 6H2l3-3M2 6l3 3M2 14h16l-3-3M18 14l-3 3', 'k']],
  collapse: [['M15 2l-5 5M10 3v4h4M2 14l4-4M2 9.500h4.500V14', 'k']],
  // 视图工具
  orbit: [[o(11, 11, 8.5), 'k'], ['M1 15q-1 4 7 1T21 5q0-4-7-1T1 15z', 'b']],
  view3d: [['M1.500 6.500h15v14h-15zM1.500 6.500l5-5h14v14l-4 5M16.500 6.500l4-5', 'k'], ['3D', 't', 9, 17, 9]],
  boxTop: [['M1.500 6.500h15v14h-15zM20.500 1.500v14l-4 5', 'k'], ['M1.500 6.500l5-5h14l-4 5z', 'l']],
  boxFull: [['M1.500 6.500l5-5h14v14l-4 5h-15z', 'l'], ['M1.500 6.500h15v14M16.500 6.500l4-5', 'b']],
  full: [['M1 7V2q0-1 1-1h5M15 1h5q1 0 1 1v5M21 15v5q0 1-1 1h-5M7 21H2q-1 0-1-1v-5', 'K']],
  visible: [['M10 20.500H1.500v-19h19V12M5 7h2M9 7h8M5 11h10M5 15h4', 'k'], ['M10 17q5-6 11 0-6 6-11 0z', 'b'], [o(15.5, 17, 1.5), 'b']],
  // 捕捉工具
  ortho: [['M3.500 2v12.500H16M3.500 10h4v4', 'k']],
  snapBox: [['M4 3.500h11v11H3.500V4', 'k'], [o(3.5, 3.5, 1.5), 'b']],
  snapCube: [['M9 1.500l6 3v8l-6 4-6-4v-8zM3 4.500l6 4 6-4M9 8.500v8', 'k'], [o(3, 4, 1.5), 'b']],
  snapX: [['M2 2l14 14M16 2L2 16', 'k']],
  snapCircle: [[o(9, 9, 7), 'k'], ['M9.500 4v6h5M5 10.500h5', 'k']],
  snapAngle: [['M2 15.500h14M3 15L15 3M7 9l3 3', 'k']],
  snapAdd: [['M1 5h7M4.500 1.500v7', 'b'], ['M7 10h10v5H7z', 'bf']],
  snapAlign: [['M2.500 1.500h6v15h-6z', 'l'], ['M10.500 8.500h5v8h-5z', 'k']],
  snapCurve: [['M2 16Q2 4 13 3M12 9l4 5h-4z', 'k'], [o(3, 4, 1), 'k'], [o(14, 3, 1), 'k']],
  keyboard: [['M1.500 5.500h13v8h-13zM3 8h10M3 10h10M5 12h6M7 5V3h3', 'k']],
}
icons.snapGroup = icons.combine

const Ico = (props) => {
  const size = props.size || 16
  const box = props.box || 16
  const muted = props.muted === '' || props.muted
  const light = props.light === '' || props.light
  const shapes = icons[props.name].map(([d, pen, x, y, fs]) => {
    if (pen === 't') return h('text', { x, y, 'font-size': fs, 'font-weight': 700, 'text-anchor': 'middle', fill: B }, d)
    const attrs = { ...pens[pen], d }
    if (muted || light) {
      const color = light ? '#fff' : '#b4b4b4'
      if (attrs.stroke !== 'none') attrs.stroke = color
      if (attrs.fill !== 'none') attrs.fill = color
    }
    return h('path', attrs)
  })
  return h('svg', { width: size, height: size, viewBox: `0 0 ${box} ${box}` }, shapes)
}
Ico.props = ['name', 'size', 'box', 'muted', 'light']

// ================= 标题与功能区 =================
const quickTools = [
  { icon: 'upload', label: '上传' },
  { icon: 'newFile', label: '新建' },
  { icon: 'open', label: '打开' },
  { icon: 'save', label: '保存' },
  { icon: 'undo', label: '撤销', arrow: true },
  { icon: 'redo', label: '恢复', arrow: true, muted: true },
  { icon: 'tableView', label: '报表' },
  { icon: 'more', label: '更多' },
]
const menuTabs = ['开始', '工程设置', '建模', '工程量', '视图', '工具', '协作']
const activeTab = ref('建模')

const b = (icon, text, arrow, off) => ({ icon, text, arrow, off })
const ribbon = [
  { label: '选择', more: true, cls: 'g-select', cols: [
    { big: 'cursor', text: '选择' },
    { items: [b('batchSel', '批量选择', false, true), b('dropper', '拾取构件'), b('findEl', '查找图元')] },
  ] },
  { label: '图纸操作', more: true, cls: 'g-sheet', cols: [
    { big: 'addSheet', text: '添加图纸', arrow: true },
    { wide: true, items: [b('scale', '设置比例', false, true), b('replace', '查找替换', false, true), b('restoreCad', '还原CAD', false, true)] },
    { items: [b('floorTab', '识别楼层表', false, true), b('compTab', '识别构件表', false, true), b('cadOpt', 'CAD识别选项')] },
  ] },
  { label: '通用操作', cls: 'g-common', cols: [
    { items: [b('define', '定义'), b('twoAxis', '两点辅轴', true), b('lenDim', '长度标注', true)] },
    { wide: true, items: [b('copyFloor', '层间复制图元'), b('storeEl', '图元存盘', true), b('auxLine', '创建辅助线')] },
    { items: [b('toFace', '平齐到面', true, true), b('owner', '创建归属', true), b('combine', '创建组合构件', true)] },
  ] },
  { label: '修改', more: true, cls: 'g-modify', cols: [
    { items: [b('trash'), b('copy'), b('move')] },
    { items: [b('rotate'), b('mirror'), b('extend', '', true)] },
    { items: [b('cutPart', '零件切割', true), b('alignLine', '线对齐'), b('ring', '环形阵列', true)] },
  ] },
  { label: '绘制', cls: 'g-draw', cols: [
    { items: [b('point'), b('line'), b('rect')] },
    { items: [b('circle', '', true), b('arc', '', true)] },
  ] },
  { label: '布置檩条', cls: 'g-purlin', cols: [{ big: 'beam', text: '布置屋面檩条', arrow: true }] },
  { label: '识别檩条', cls: 'g-rec', cols: [
    { items: [b('lineRec', '选线识别', false, true), b('batchRec', '批量识别', false, true)] },
  ] },
  { label: '节点、细部、参数化', cls: 'g-node', cols: [
    { big: 'node', text: '生成节点', active: true },
    { big: 'part', text: '生成细部', arrow: true },
    { items: [b('editNode', '编辑节点细部/参数化'), b('explode', '炸开节点细部/自定义'), b('customNode', '创建自定义节点', true)] },
  ] },
  { label: '檩条二次编辑', cls: 'g-edit', cols: [
    { items: [b('editBeam', '编辑檩条布置参数'), b('delBeam', '批量删除檩条')] },
  ] },
]
const combos = ['基础层', '次构件', '檩条', 'LT-1']

// ================= 导航栏 =================
const activeNav = ref('檩条(U)')
const navSections = [
  { title: '轴线', items: [] },
  { title: '主构件', items: [
    ['portal', '门式刚架'], ['column', '钢柱(Z)'], ['girder', '钢梁(L)'], ['crane', '吊车梁(P)'],
    ['topChord', '上弦/外弦(W)'], ['botChord', '下弦/内弦(E)'], ['web', '腹杆(F)'], ['diagWeb', '斜腹杆(X)'],
    ['ringBeam', '环梁'], ['arch', '主拱(P)'], ['boltBall', '螺栓球(Q)'], ['weldBall', '焊接球(Q)'],
  ] },
  { title: '次构件', items: [
    ['tie', '系杆(X)'], ['purlin', '檩条(U)'], ['knee', '隅撑(Y)'], ['brace', '拉条(V)'], ['gutter', '天沟(H)'],
    ['cross', '支撑(A)'], ['rail', '栏杆'], ['door', '门框(C)'], ['windowF', '窗框(C)'], ['strut', '撑杆(V)'],
  ] },
  { title: '组合构件', items: [] },
  { title: '配件', items: [] },
  { title: '面板', items: [] },
]

// ================= 显示设置 =================
const viewTools = [
  { icon: 'orbit' }, { icon: 'view3d' }, { icon: 'boxTop', arrow: true },
  { icon: 'boxFull', arrow: true }, { icon: 'full' }, { icon: 'visible', ruled: true },
]
const layers = [
  { names: ['型材桁架', '天窗架', '顺轨桁架', '横轨桁架', '桁架柱', '屋盖', '网壳', '女儿墙柱', '异形构件', '组合门架', '网架单元', '钢管束', '自定义组合'], off: true },
  { title: '配件', names: ['钢板', '螺栓', '栓钉', '锚栓', '抗剪键', '型钢配件', '预埋件', '孔洞'] },
  { title: '面板', names: ['屋面板', '墙面板', '楼承板', '桁架楼承板', '采光板', '走道板', '平台板', '自定义面板'] },
  { title: '其它', names: ['尺寸标注', '辅助线'], off: true },
]
const layerRows = reactive(layers.flatMap((g) => {
  const rows = g.names.map((name, i) => ({
    name, show: true, label: false, off: g.off, last: i === g.names.length - 1, tail: g.title === '其它',
  }))
  if (g.title) rows.unshift({ name: g.title, parent: true, show: true, label: false, off: g.off })
  return rows
}))

const snapTools = [
  { icon: 'ortho' }, { icon: 'snapBox', arrow: true, on: true }, { icon: 'snapCube', arrow: true, on: true },
  { icon: 'snapX', muted: true }, { icon: 'snapCircle', arrow: true }, { icon: 'snapAngle', arrow: true },
  { icon: 'snapAdd', arrow: true, on: true }, { icon: 'snapGroup' }, { icon: 'snapAlign' }, { icon: 'snapCurve' },
]

// ================= 对话框 =================
const dims = reactive([
  { id: 'd6', value: '6' }, { id: 'd200', value: '200' }, { id: 'd10', value: '10' }, { id: 'd150', value: '150' },
  { id: 'd90', value: '90' }, { id: 'd50', value: '50' }, { id: 'd30', value: '30' },
])
const boltPoints = [[672.5, 685.5], [691.5, 685.5], [672.5, 707.5], [691.5, 707.5]]
const partHeads = ['零件名称', '数量', '厚度', '规格', '材质', '归属', '显示']
const parts = reactive([
  { name: '檩托板', count: 1, thick: 10, spec: '10*150*186', material: 'Q235B', owner: '主件', show: true },
  { name: '加劲板', count: 1, thick: 6, spec: '6*186*200', material: 'Q235B', owner: '主件', show: false },
])
// 三维预览中的型号标注：字符、中心点、字号
const modelText = [
  ['Z', 946, 717, 58], ['-', 962, 722, 58], ['1', 983, 731, 58], ['[', 1008, 740, 62], ['H', 1039, 745, 58],
  ['W', 1084, 757, 58], ['2', 1124, 770, 62], ['0', 1159, 778, 62], ['0', 1194, 788, 64], ['*', 1229, 797, 64],
  ['2', 1260, 807, 70], ['0', 1301, 817, 72], ['0', 1341, 828, 74], ['*', 1377, 837, 74], ['8', 1419, 849, 74],
  ['*', 1455, 858, 74], ['1', 1499, 872, 74],
]
</script>

<style>
html, body { margin: 0; background: #f0f0f0; }
</style>

<style scoped>
.app {
  display: flex;
  flex-direction: column;
  height: 100vh;
  overflow: hidden;
  position: relative;
  background: #fff;
  color: #222;
  font: 12px/16px "Noto Sans", "Noto Sans CJK SC", sans-serif;
}
.app *, .app *::after, .app *::before { box-sizing: border-box; }
button, input, select { font: inherit; color: inherit; }
svg { display: block; flex: none; }
a { color: inherit; text-decoration: none; }
button { white-space: nowrap; }
.plain { display: flex; align-items: center; border: 0; background: none; padding: 0; }
.arrow {
  flex: none;
  width: 0;
  height: 0;
  border: 3px solid transparent;
  border-top: 4px solid #888;
  border-bottom: 0;
}
.arrow.large { border-width: 4px 4px 0; }
.arrow.dark { border-top-color: #444a57; }
input[type="checkbox"] {
  appearance: none;
  display: block;
  position: relative;
  width: 14px;
  height: 14px;
  margin: 0 auto;
  border: 1px solid #858585;
  border-radius: 2px;
  background: #fff;
}
input[type="checkbox"]:disabled { background: #f0f0f0; border-color: #b0b0b0; }
input[type="checkbox"]:checked { background: #2680e6; border-color: #2680e6; }
input[type="checkbox"]:checked::after {
  content: "";
  position: absolute;
  left: 4px;
  top: 1px;
  width: 4px;
  height: 8px;
  border: solid #fff;
  border-width: 0 2px 2px 0;
  transform: rotate(42deg);
}
.btn {
  height: 26px;
  border: 1px solid #c6c6c6;
  border-radius: 3px;
  background: #fff;
  padding: 0 8px;
}
.btn.primary { background: #2b80e4; border-color: #2b80e4; color: #fff; }

/* ================= 标题栏 ================= */
.header {
  flex: none;
  display: grid;
  grid-template-columns: 49px 1fr auto 1fr 49px;
  grid-template-rows: 21px 20px;
  border-bottom: 1px solid #ececec;
  height: 41px;
}
.logo { grid-row: 1 / 3; padding: 3px 0 0 11px; position: relative; }
.corner { position: absolute; right: 5px; bottom: 6px; border: 2px solid #666; border-left-color: transparent; border-top-color: transparent; }
.quick { display: flex; align-items: center; gap: 10px; padding: 0 0 1px 6px; }
.quick .plain { gap: 5px; }
.title { margin: 0; font-size: 12px; font-weight: 400; line-height: 21px; white-space: nowrap; }
.win-btns { grid-column: 4 / 6; display: flex; justify-content: flex-end; align-items: center; gap: 24px; padding: 0 12px 3px 0; }
.tabs { display: flex; grid-column: 2 / 4; }
.tabs a { padding: 0 13px; line-height: 20px; border-radius: 10px; height: 20px; }
.tabs a.active { background: #1a8cff; color: #fff; }
.user-area { grid-column: 4 / 6; display: flex; align-items: center; justify-content: flex-end; padding: 0 5px 0 0; gap: 8px; }
.search-box { display: flex; align-items: center; width: 320px; height: 17px; border: 1px solid #ddd; border-radius: 2px; padding-right: 6px; margin-right: -2px; }
.search-box input, .list-search input { flex: 1; min-width: 0; border: 0; padding: 0 3px; background: none; outline: none; height: 15px; }
input::placeholder { color: #888; }
.avatar { margin-right: -7px; }
.user-name { margin-right: 8px; }
.help { font-size: 15px; gap: 2px; }

/* ================= 功能区 ================= */
.ribbon { flex: none; display: flex; height: 99px; border-bottom: 1px solid #d2d2d2; }
.group { display: flex; flex-direction: column; position: relative; padding: 3px 0 0 9px; }
.group::after { content: ""; position: absolute; right: 0; top: 2px; bottom: 4px; border-right: 1px solid #dcdcdc; }
.group-body { flex: 1; display: flex; gap: 7px; }
.group-label { display: flex; align-items: center; justify-content: center; gap: 6px; height: 24px; padding-right: 8px; }
.g-select { width: 134px; padding-left: 8px; }
.g-sheet { width: 246px; padding-left: 6px; }
.g-common { width: 312px; padding-left: 8px; }
.g-modify { width: 154px; padding-left: 8px; }
.g-draw { width: 67px; padding-left: 8px; }
.g-purlin { width: 88px; padding-left: 7px; }
.g-rec { width: 90px; padding-left: 8px; }
.g-node { width: 265px; padding-left: 6px; }
.g-edit { width: 138px; padding-left: 8px; }
.g-select .group-body { gap: 4px; }
.g-sheet .group-body, .g-node .group-body { gap: 4px; }
.col.wide { margin-right: 5px; }
.g-sheet .col.wide { margin-right: 8px; }
.big { display: flex; flex-direction: column; align-items: center; border: 0; border-radius: 3px; background: none; padding: 1px 0 0; margin-top: 2px; height: 67px; min-width: 40px; }
.big span { line-height: 18px; margin-top: 2px; white-space: nowrap; }
.big.active { background: #c2d9f2; padding: 1px 4px 0; }
.small { display: flex; align-items: center; height: 23px; border: 0; background: none; padding: 0; white-space: nowrap; }
.small span { margin-left: 3px; }
.small .arrow { margin-left: 6px; }
.small svg + .arrow { margin-left: 3px; }
.small:disabled { color: #aaa; }
.small:disabled .arrow { border-top-color: #bbb; }

.combos { flex: none; display: flex; gap: 3px; height: 26px; padding: 1px 2px 2px; background: #f0f0f0; }
.select-wrap { position: relative; display: block; width: 99px; height: 23px; }
.select-wrap select { appearance: none; width: 100%; height: 100%; border: 1px solid #dadada; border-radius: 3px; background: #fff; padding: 0 3px; }
.select-wrap::after { content: ""; position: absolute; right: 5px; top: 10px; border: 3px solid transparent; border-top: 4px solid #555; border-bottom: 0; pointer-events: none; }

/* ================= 停靠面板 ================= */
.main { flex: 1; display: flex; min-height: 0; }
.grip { flex: none; display: flex; align-items: center; justify-content: flex-end; height: 12px; background: #e6e6e6; border-bottom: 1px solid #d8d8d8; padding-right: 3px; }
.panel-title { flex: none; height: 22px; line-height: 21px; padding-left: 8px; background: #f0f0f0; border-bottom: 1px solid #dcdcdc; color: #777; }
.nav-panel, .show-panel { display: flex; flex-direction: column; border: 1px solid #d8d8d8; border-top: 0; }
.nav-panel { flex: none; width: 163px; margin-right: 4px; }
.nav-tools { flex: none; display: flex; align-items: center; gap: 4px; height: 28px; padding-left: 1px; border-bottom: 1px solid #dcdcdc; }
.nav-tools .plain { width: 24px; height: 22px; justify-content: center; border-radius: 3px; }
.nav-tools .on { background: #c3dbf3; }
.nav-scroll { flex: 1; display: flex; min-height: 0; overflow: hidden; padding-top: 4px; }
.nav-list { width: 147px; }
.nav-head, .nav-item { height: 25px; line-height: 25px; margin-bottom: 3px; }
.nav-head { background: #ebebeb; padding-left: 3px; }
.nav-item { display: flex; align-items: center; padding-left: 17px; gap: 14px; white-space: nowrap; }
.nav-item.active { background: #d2e6ff; }
.nav-scroll .thumb { width: 8px; margin: 12px 0 66px 3px; border-radius: 4px; background: #ccc; }

.middle { flex: none; display: flex; flex-direction: column; width: 288px; gap: 4px; }
.list-panel, .prop-panel { display: flex; flex-direction: column; margin-right: 4px; border: 1px solid #d8d8d8; border-top: 0; }
.list-panel { height: 426px; flex: none; }
.prop-panel { flex: 1; min-height: 0; border-bottom: 0; }
.panel-tabs { flex: none; display: flex; height: 23px; background: #f0f0f0; border-bottom: 1px solid #dcdcdc; }
.panel-tabs button { border: 0; background: #dedede; color: #777; padding: 0 9px; }
.panel-tabs.second button { padding: 0 8px; }
.panel-tabs .active { background: #f0f0f0; color: #222; font-weight: 700; padding: 0 8px; }
.list-tools { flex: none; display: flex; align-items: center; gap: 8px; height: 27px; padding-left: 4px; border-bottom: 1px solid #dcdcdc; }
.list-tools .plain { gap: 4px; }
.list-tools .arrow { margin-left: 2px; }
.list-search { display: flex; align-items: center; height: 20px; border-bottom: 1px solid #dcdcdc; padding: 0 6px 0 0; }
.tree { list-style: none; margin: 0; padding: 3px 0 0 12px; }
.tree li { display: flex; align-items: center; gap: 3px; height: 24px; }
.tree .lv2 { padding-left: 20px; }
.tree .lv3 { padding-left: 48px; }
.tree .lv3 span { background: #c2d9f2; border-radius: 2px; padding: 2px 4px 3px; }

.prop-body { flex: 1; display: flex; align-items: flex-start; padding: 8px 0 0 7px; overflow: hidden; }
.point-form { width: 240px; margin-left: -39px; position: relative; color: #333; }
.point-form p { margin: 0; line-height: 18px; }
.point-form .rot { margin-top: 7px; margin-bottom: 10px; }
.field { display: flex; align-items: center; gap: 6px; margin-top: 9px; margin-bottom: 7px; width: 160px; color: #444; }
.field + .field { margin-bottom: 7px; margin-top: 7px; }
.field label { width: 11px; }
.field input { flex: 1; min-width: 0; height: 25px; border: 1px solid #c4c4c4; border-radius: 3px; background: #e4e4e4; color: #777; padding: 0 3px; }
.turns { display: flex; gap: 7px; padding-left: 17px; }
.turns button, .direction button { width: 51px; height: 24px; border: 1px solid #c4c4c4; border-radius: 3px; background: #e4e4e4; color: #777; }
.direction { display: flex; align-items: center; gap: 12px; margin-top: 10px; }
.direction button { padding: 0 10px; }

/* ================= 绘图区 ================= */
.canvas { flex: 1; min-width: 0; position: relative; overflow: hidden; background: #20262f; }
.scene { width: 100%; height: 100%; }
.axis-no { fill: #777; font-size: 18px; }
.axis-text { font-size: 14px; }
.hint { position: absolute; left: 0; right: 0; bottom: 0; height: 25px; display: flex; align-items: center; justify-content: center; gap: 2px; color: #fff; font-weight: 500; white-space: nowrap; }
.view-tools { position: absolute; top: 0; right: 0; display: flex; flex-direction: column; align-items: center; gap: 7px; width: 33px; background: #fff; border: 1px solid #ddd; border-radius: 2px; padding: 11px 0; }
.view-tools .plain { flex-direction: column; gap: 6px; }
.view-tools .ruled { border-top: 1px solid #555; padding-top: 5px; }
.splitter { flex: none; width: 4px; display: flex; align-items: flex-start; }
.splitter i { width: 4px; height: 100px; margin-top: 372px; background: #5f6872; }

.show-panel { flex: none; width: 270px; }
.card-tabs { flex: none; display: flex; align-items: flex-end; gap: 4px; }
.show-panel .card-tabs { height: 27px; padding-left: 2px; border-bottom: 1px solid #dcdcdc; }
.card-tabs button { border: 0; background: #dcdcdc; color: #444; border-radius: 4px 4px 0 0; padding: 0 6px; height: 21px; }
.card-tabs .active { position: relative; z-index: 1; background: #fff; border: 1px solid #d0d0d0; border-bottom: 0; color: #1a78e0; height: 24px; margin-bottom: -1px; }
.show-box { flex: none; display: flex; margin: 2px 2px 0; border: 1px solid #d8d8d8; padding-bottom: 3px; }
.show-table { flex: 1; border-collapse: separate; border-spacing: 0; table-layout: fixed; }
.show-table th, .show-table td { height: 21px; padding: 0; border-right: 1px solid #d9d9d9; border-bottom: 1px solid #d9d9d9; line-height: 20px; font-weight: 400; text-align: center; }
.show-table .c-name { width: 122px; border-left: 1px solid #d9d9d9; }
.show-table .picked { background: #80b8f7; border: 1px solid #5c9eea; border-top-width: 0; color: #fff; font-weight: 700; }
.leaf { position: relative; height: 20px; padding-left: 40px; text-align: left; white-space: nowrap; }
.leaf::before { content: ""; position: absolute; left: 7px; top: 0; bottom: -1px; width: 11px; border: solid #dcdcdc; border-width: 0 1px; }
.leaf::after { content: ""; position: absolute; left: 18px; top: 9px; width: 16px; border-top: 1px solid #dcdcdc; }
.leaf.tail::before { border-left-color: transparent; }
.leaf.last::before { border-right-color: transparent; }
.leaf.last::after { left: 17px; top: 0; width: 17px; height: 10px; border: solid #dcdcdc; border-width: 0 0 1px 1px; }
.leaf.parent { padding-left: 30px; }
.leaf.parent::before { border-right: 0; }
.leaf.parent::after { left: 7px; width: 5px; }
.leaf.end::before { bottom: 10px; }
.fold { position: absolute; left: 11px; top: 3px; width: 13px; height: 13px; border: 1px solid #888; border-radius: 2px; background: #fff; padding: 0; }
.fold::after { content: ""; position: absolute; left: 3px; top: 5px; width: 5px; border-top: 1px solid #333; }
.show-box .thumb { flex: none; width: 8px; margin: 384px 3px 10px 4px; border-radius: 4px; background: #ccc; }
.show-foot { display: flex; justify-content: flex-end; padding: 6px 8px 0 0; }

/* ================= 状态栏 ================= */
.status { flex: none; display: flex; align-items: center; height: 33px; background: #fbfbfb; border-bottom: 1px solid #eee; padding-left: 2px; white-space: nowrap; }
.st1 { width: 90px; }
.st2, .st3 { width: 110px; }
.st4 { width: 111px; }
.snap { display: flex; gap: 4px; }
.snap button { display: flex; align-items: center; gap: 4px; height: 25px; border: 1px solid #999; border-radius: 3px; background: #fff; padding: 0 2px; }
.snap .on { background: #d5e5fa; border-color: #3f88dc; }
.plane { height: 25px; }
.plane select { border-color: #aaa; }

/* ================= 任务栏 ================= */
.taskbar {
  flex: none;
  display: flex;
  align-items: center;
  height: 40px;
  border-top: 2px solid #24506f;
  background: linear-gradient(100deg, #1a5e98 0, #2f86b8 4%, #4fabdc 17%, #55b0de 32%, #3f9bd2 42%, #2d84c4 50%, #3a93cf 56%, #2a78bb 62%, #1f5f9f 74%, #174a85 84%, #113a6d 100%);
  color: #fff;
}
.orb { border: 0; background: none; padding: 0; margin-left: 7px; }
.dots { width: 10px; height: 30px; margin: 0 10px 0 11px; background: radial-gradient(#123c66 1px, transparent 1px) 0 0 / 3px 3px; }
.task { display: flex; align-items: center; justify-content: center; width: 59px; height: 38px; margin-right: 3px; border: 1px solid #1b4f7c; border-radius: 3px; background: linear-gradient(135deg, rgba(255, 255, 255, .6), rgba(255, 255, 255, .15) 50%, rgba(255, 255, 255, .3)); box-shadow: inset 0 0 0 1px rgba(255, 255, 255, .4); padding: 0; }
.task.current { background: linear-gradient(135deg, #f3fafd, #b5dcef 50%, #d6eef8); }
.doc-mark { font-size: 30px; font-weight: 700; fill: #ffef00; stroke: #222; }
.tray { margin-left: auto; display: flex; align-items: center; gap: 8px; }
.clock { display: flex; flex-direction: column; align-items: center; width: 60px; margin: 0 19px 0 14px; line-height: 18px; }
.note { margin-right: 11px; }
.desktop { width: 14px; height: 38px; border: 1px solid #7890a8; background: linear-gradient(#5a7d9e, #1a3c64 50%, #2c5480); }

/* ================= 对话框 ================= */
.overlay { position: absolute; inset: 0; display: flex; justify-content: center; align-items: flex-start; padding: 220px 0 0 45px; pointer-events: none; }
.dialog { position: relative; width: 1081px; max-width: 100%; background: #fff; border: 1px solid #b8b8b8; box-shadow: 2px 4px 14px 4px rgba(0, 0, 0, .6); pointer-events: auto; }
.dlg-title { display: flex; align-items: center; justify-content: space-between; height: 37px; padding: 0 11px; }
.dlg-title h2 { margin: 0; font-size: 14px; font-weight: 400; }
.steps { display: flex; align-items: center; list-style: none; margin: 0; padding: 0 0 0 10px; height: 30px; }
.steps li { display: flex; align-items: center; gap: 7px; color: #444; }
.steps .on { margin-right: 3px; }
.steps b { width: 26px; height: 26px; line-height: 24px; border: 1px solid #b0b0b0; border-radius: 50%; text-align: center; font-weight: 400; }
.steps .on b { background: #0a84e0; border-color: #0a84e0; color: #fff; }
.steps .bar { width: 100px; height: 2px; margin: 0 9px; background: #8cc2f2; }
.dlg-body { display: flex; gap: 5px; align-items: flex-start; padding: 6px 8px 9px 13px; }
.drawing { flex: none; display: grid; grid-template-columns: 454px 14px; grid-template-rows: 544px 14px; margin-top: 3px; border: 1px solid #8a8d99; }
.sheet { position: relative; }
.dim { position: absolute; width: 45px; height: 25px; border: 1px solid #ccc; border-radius: 3px; background: #fff; padding: 0 2px; }
.d6 { left: 302px; top: 28px; }
.d200 { left: 114px; top: 74px; }
.d10 { left: 319px; top: 249px; }
.d150 { left: 205px; top: 275px; }
.d90 { left: 288px; top: 386px; }
.d50 { left: 117px; top: 402px; }
.d30 { left: 185px; top: 507px; }
.v-thumb, .h-thumb { border-radius: 4px; background: #ccc; }
.v-thumb { width: 8px; margin: 55px 0 14px 3px; }
.h-thumb { height: 8px; margin: 3px 20px 0 14px; }
.dlg-right { flex: 1; min-width: 0; }
.parts-tabs button { min-width: 68px; }
.parts-tabs .active { min-width: 70px; height: 26px; }
.parts-box { height: 214px; border: 2px solid #c6c6c6; padding: 1px 2px 0 0; margin-top: -1px; }
.parts { width: 100%; table-layout: fixed; border-collapse: separate; border-spacing: 0; }
.parts th, .parts td { height: 21px; line-height: 20px; padding: 0 3px; font-weight: 400; border-right: 1px solid #ccc; border-bottom: 1px solid #ccc; }
.parts th { background: #f0f0f0; height: 22px; }
.parts .no { text-align: center; padding: 0; }
.parts .chk { padding: 0 7px; }
.parts .chk input { margin: 0; }
.p1 { width: 20px; }
.p2 { width: 96px; }
.p3, .p4 { width: 64px; }
.p6 { width: 71px; }
.p7 { width: 67px; }
.p8 { width: 37px; }
.preview { margin-top: 102px; border: 1px solid #c8c8c8; padding: 7px 7px 0 3px; }
.preview p { margin: 0; line-height: 16px; }
.preview svg { width: 100%; height: 199px; font-family: "Noto Sans", sans-serif; }
.dlg-foot { display: flex; justify-content: flex-end; gap: 6px; padding: 10px 2px 0 0; }
.dlg-foot .btn { width: 80px; }
.resize { position: absolute; right: 3px; bottom: 3px; }
</style>
